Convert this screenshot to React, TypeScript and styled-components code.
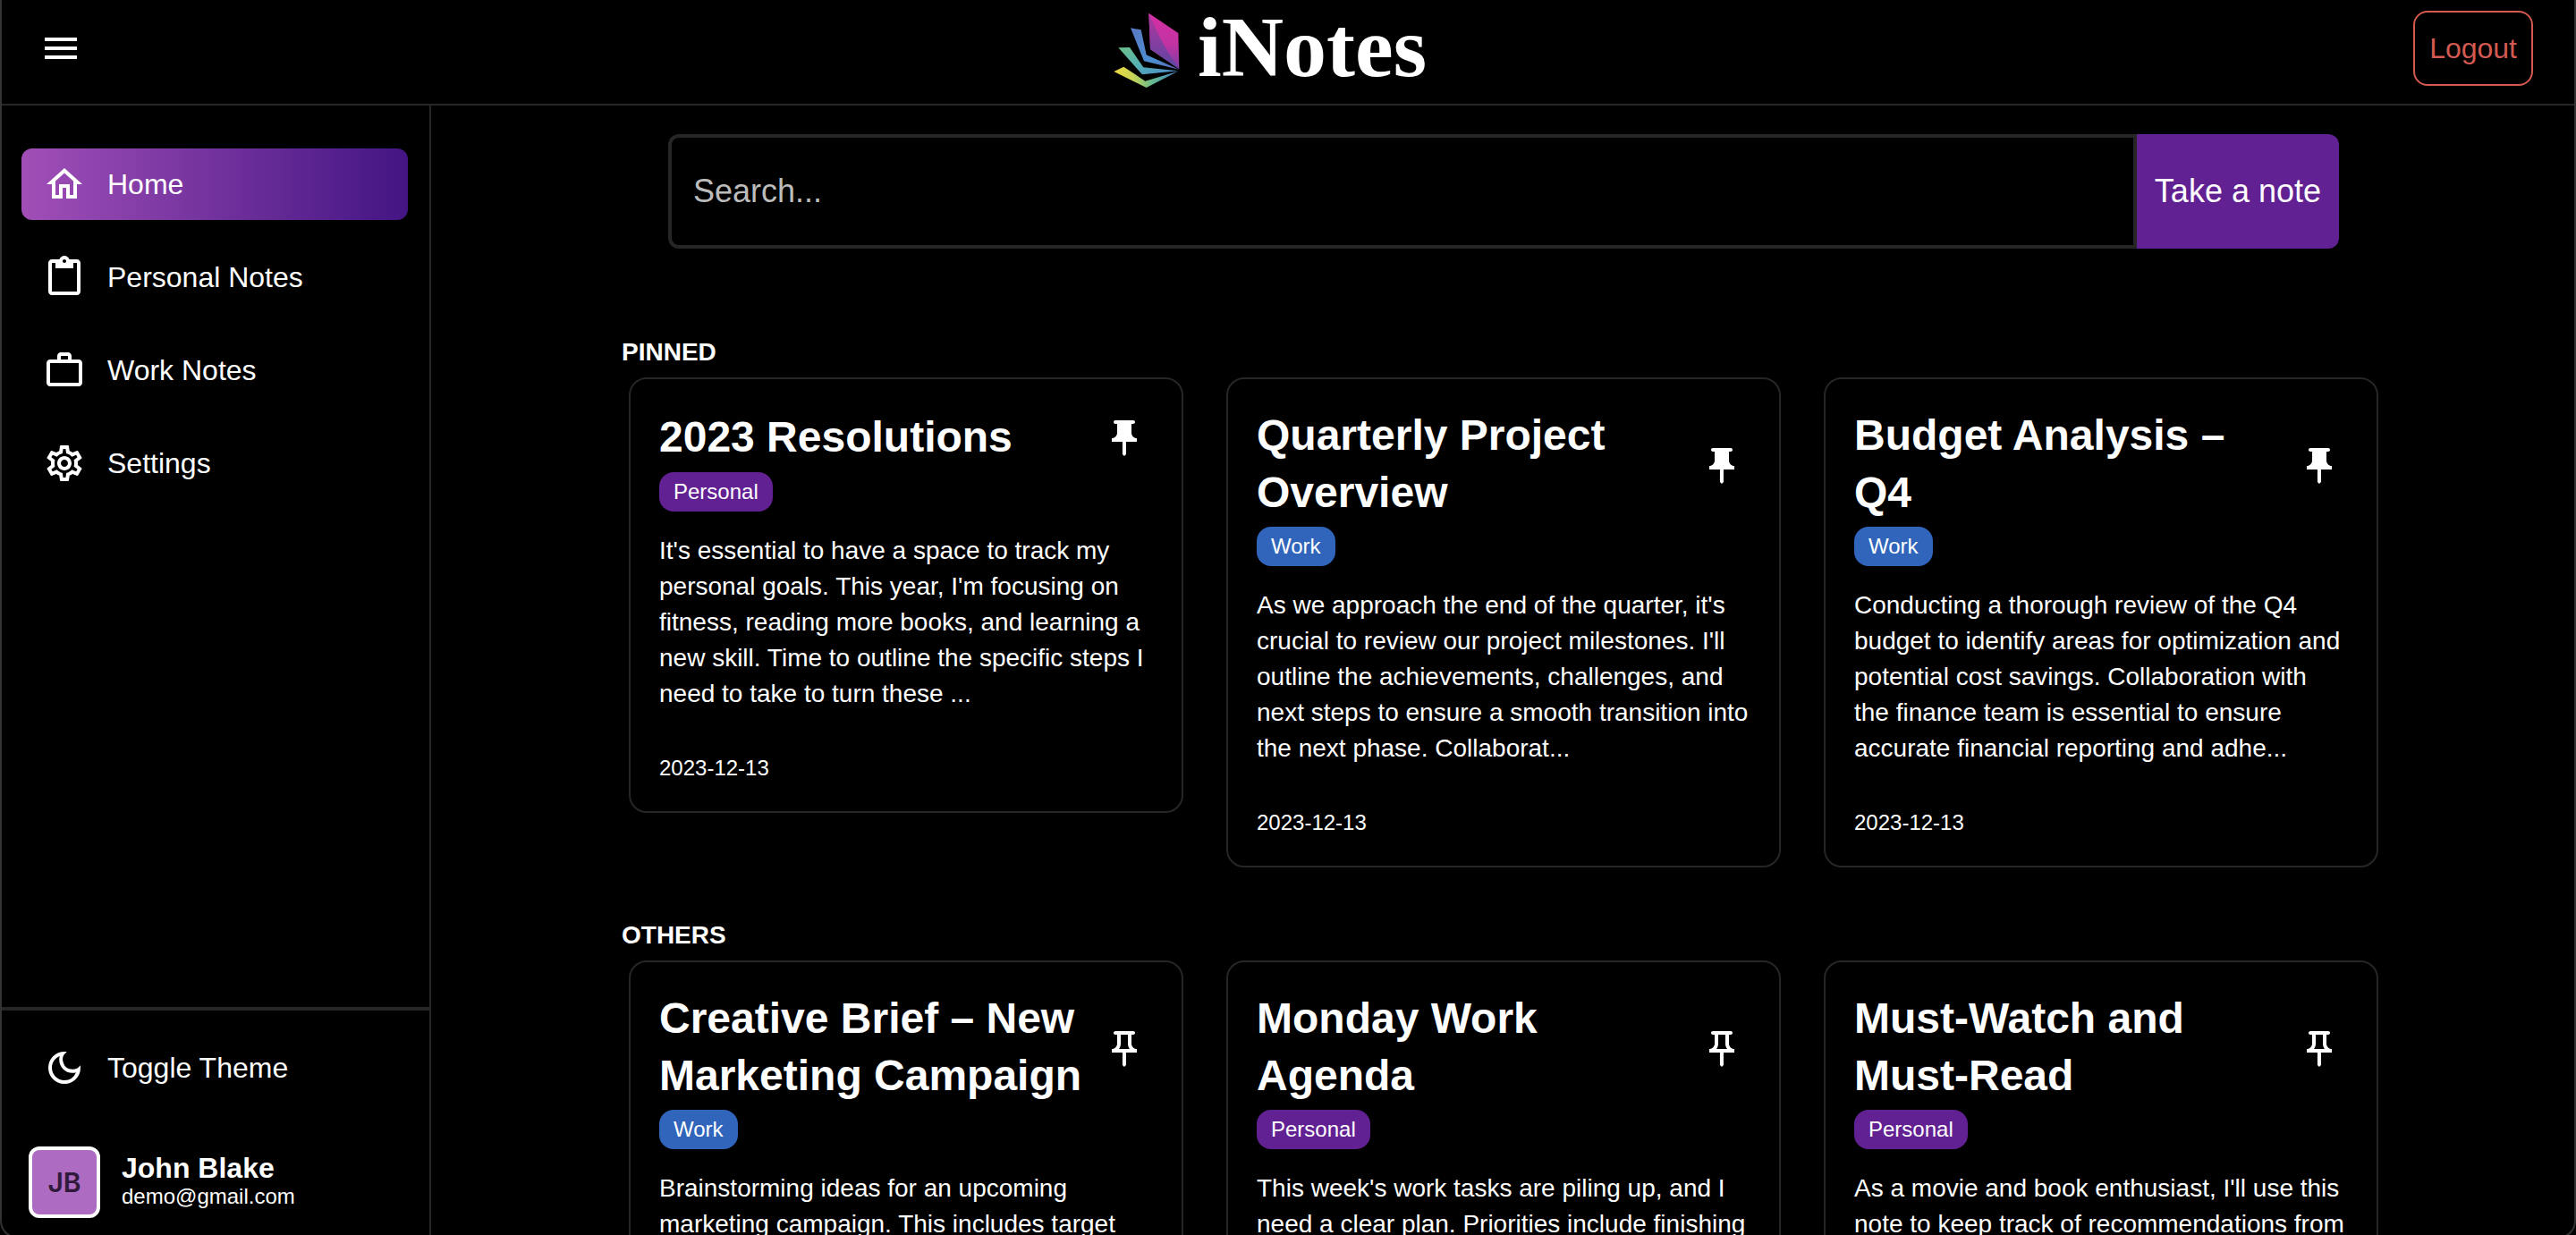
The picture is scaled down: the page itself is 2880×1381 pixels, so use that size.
import React from "react";
import styled, { createGlobalStyle } from "styled-components";
import {
  MdMenu,
  MdOutlineHome,
  MdContentPaste,
  MdWorkOutline,
  MdOutlineSettings,
  MdOutlineDarkMode,
  MdPushPin,
  MdOutlinePushPin,
} from "react-icons/md";

const colors = {
  bg: "#000000",
  text: "#ffffff",
  line: "#262626",
  frame: "#333333",
  purple: "#622192",
  blue: "#3065bb",
  danger: "#d25a50",
};

const GlobalStyle = createGlobalStyle`
  * { box-sizing: border-box; }
  body {
    margin: 0;
    background: ${colors.bg};
    color: ${colors.text};
    font-family: "Liberation Sans", Helvetica, Arial, sans-serif;
    font-size: 32px;
  }
  button, input { font: inherit; color: inherit; }
  h1, h2, h3, p { margin: 0; }
`;

const Shell = styled.div`
  display: flex;
  flex-direction: column;
  height: 100vh;
  overflow: hidden;
`;

const WindowFrame = styled.div`
  position: fixed;
  inset: 0 0 -4px;
  border: 2px solid ${colors.frame};
  border-top: 0;
  border-radius: 0 0 20px 20px;
  pointer-events: none;
`;

const Header = styled.header`
  display: flex;
  align-items: center;
  justify-content: space-between;
  flex: none;
  padding: 0 48px 8px 44px;
  border-bottom: 2px solid ${colors.line};
`;

const IconButton = styled.button`
  display: flex;
  flex: none;
  padding: 0;
  border: 0;
  background: none;
  cursor: pointer;
`;

const Brand = styled.a`
  display: flex;
  align-items: center;
  gap: 20px;
  margin-left: 50px;
  padding-bottom: 2px;
  color: inherit;
  text-decoration: none;
`;

const BrandName = styled.h1`
  font-family: "Liberation Serif", "Times New Roman", serif;
  font-size: 96px;
  line-height: 106px;
  font-weight: 700;
`;

const LogoutButton = styled.button`
  height: 84px;
  padding: 0 16px;
  border: 2px solid ${colors.danger};
  border-radius: 16px;
  background: none;
  color: ${colors.danger};
  cursor: pointer;
`;

const Body = styled.div`
  display: flex;
  flex: 1;
  min-height: 0;
`;

const Sidebar = styled.aside`
  display: flex;
  flex-direction: column;
  justify-content: space-between;
  flex: none;
  width: 482px;
  border-right: 2px solid ${colors.line};
`;

const Nav = styled.nav`
  display: flex;
  flex-direction: column;
  gap: 24px;
  padding: 48px 24px;
`;

const NavLink = styled.a<{ $active?: boolean }>`
  display: flex;
  align-items: center;
  gap: 24px;
  height: 80px;
  padding: 0 24px;
  border-radius: 12px;
  background: ${(p) => (p.$active ? "linear-gradient(90deg, #a14fb7, #431583)" : "none")};
  color: inherit;
  text-decoration: none;
`;

const SidebarFooter = styled.div`
  display: flex;
  flex-direction: column;
  gap: 48px;
  padding: 24px 24px 19px;
  border-top: 4px solid ${colors.line};
`;

const ThemeToggle = styled.button`
  display: flex;
  align-items: center;
  gap: 24px;
  height: 80px;
  padding: 0 24px;
  border: 0;
  background: none;
  cursor: pointer;
`;

const User = styled.div`
  display: flex;
  align-items: center;
  gap: 24px;
  padding: 0 8px;
`;

const Avatar = styled.div`
  display: grid;
  place-items: center;
  width: 80px;
  height: 80px;
  border: 4px solid #ffffff;
  border-radius: 12px;
  background: #ae6bc2;
  color: #301a3c;
  font-family: Inter, sans-serif;
  font-size: 30px;
  font-weight: 600;
`;

const UserText = styled.div`
  padding-bottom: 4px;
`;

const UserName = styled.p`
  font-weight: 700;
  line-height: 36px;
`;

const UserEmail = styled.p`
  font-size: 24px;
  line-height: 28px;
`;

const Main = styled.main`
  flex: 1;
  min-width: 0;
  padding-top: 32px;
  overflow-y: auto;
  scrollbar-width: none;
`;

const SearchBar = styled.form`
  display: flex;
  width: 78%;
  max-width: 1868px;
  height: 128px;
  margin: 0 auto 94px;
  font-size: 36px;
`;

const SearchInput = styled.input`
  flex: 1;
  min-width: 0;
  padding: 0 24px;
  border: 4px solid ${colors.line};
  border-radius: 12px 0 0 12px;
  background: none;
  outline: none;
  &::placeholder { color: #bcbcbc; opacity: 1; }
`;

const TakeNoteButton = styled.button`
  flex: none;
  padding: 0 20px;
  border: 0;
  border-radius: 0 12px 12px 0;
  background: ${colors.purple};
  cursor: pointer;
`;

const Section = styled.section`
  max-width: 1972px;
  margin: 0 auto 54px;
`;

const SectionTitle = styled.h2`
  padding-top: 2px;
  margin-bottom: 8px;
  font-size: 28px;
  line-height: 40px;
  text-transform: uppercase;
`;

const CardGrid = styled.div`
  display: grid;
  grid-template-columns: repeat(3, 1fr);
  align-items: start;
  gap: 48px;
  padding: 0 8px;
`;

const Card = styled.article`
  padding: 31px 32px 30px;
  border: 2px solid ${colors.line};
  border-radius: 20px;
`;

const CardHead = styled.div`
  display: flex;
  align-items: center;
  justify-content: space-between;
`;

const CardTitle = styled.h3`
  font-size: 48px;
  line-height: 64px;
`;

const PinButton = styled(IconButton)`
  padding: 11px 8px 8px;
`;

const Tag = styled.span<{ $kind: string }>`
  display: block;
  width: fit-content;
  margin: 6px 0 24px;
  padding: 4px 16px;
  border-radius: 16px;
  background: ${(p) => (p.$kind === "Work" ? colors.blue : colors.purple)};
  font-size: 24px;
  line-height: 36px;
`;

const CardText = styled.p`
  font-size: 28px;
  line-height: 40px;
`;

const CardDate = styled.time`
  display: block;
  margin-top: 45px;
  font-size: 24px;
  line-height: 36px;
`;

interface Note {
  title: string;
  tag: "Personal" | "Work";
  text: string;
  date: string;
}

const pinned: Note[] = [
  {
    title: "2023 Resolutions",
    tag: "Personal",
    text: "It's essential to have a space to track my personal goals. This year, I'm focusing on fitness, reading more books, and learning a new skill. Time to outline the specific steps I need to take to turn these ...",
    date: "2023-12-13",
  },
  {
    title: "Quarterly Project Overview",
    tag: "Work",
    text: "As we approach the end of the quarter, it's crucial to review our project milestones. I'll outline the achievements, challenges, and next steps to ensure a smooth transition into the next phase. Collaborat...",
    date: "2023-12-13",
  },
  {
    title: "Budget Analysis – Q4",
    tag: "Work",
    text: "Conducting a thorough review of the Q4 budget to identify areas for optimization and potential cost savings. Collaboration with the finance team is essential to ensure accurate financial reporting and adhe...",
    date: "2023-12-13",
  },
];

const others: Note[] = [
  {
    title: "Creative Brief – New Marketing Campaign",
    tag: "Work",
    text: "Brainstorming ideas for an upcoming marketing campaign. This includes target",
    date: "2023-12-13",
  },
  {
    title: "Monday Work Agenda",
    tag: "Personal",
    text: "This week's work tasks are piling up, and I need a clear plan. Priorities include finishing",
    date: "2023-12-13",
  },
  {
    title: "Must-Watch and Must-Read",
    tag: "Personal",
    text: "As a movie and book enthusiast, I'll use this note to keep track of recommendations from",
    date: "2023-12-13",
  },
];

const navItems = [
  { label: "Home", Icon: MdOutlineHome },
  { label: "Personal Notes", Icon: MdContentPaste },
  { label: "Work Notes", Icon: MdWorkOutline },
  { label: "Settings", Icon: MdOutlineSettings },
];

function Logo() {
  return (
    <svg width="74" height="92" viewBox="77 20 222 276" aria-hidden="true">
      <defs>
        <linearGradient id="page1" x1="0.5" y1="0" x2="0.5" y2="1">
          <stop offset="0" stopColor="#d42fa4" />
          <stop offset="0.55" stopColor="#c233a2" />
          <stop offset="1" stopColor="#7a3fa4" />
        </linearGradient>
        <linearGradient id="page1Fold" x1="0" y1="0" x2="0" y2="1">
          <stop offset="0" stopColor="#b5359f" />
          <stop offset="1" stopColor="#5a46a2" />
        </linearGradient>
        <linearGradient id="page2" x1="0" y1="0" x2="1" y2="1">
          <stop offset="0" stopColor="#5b78c4" />
          <stop offset="0.6" stopColor="#4b8fd0" />
          <stop offset="1" stopColor="#5f63b4" />
        </linearGradient>
        <linearGradient id="page3" x1="0" y1="0" x2="1" y2="1">
          <stop offset="0" stopColor="#6cc08c" />
          <stop offset="0.5" stopColor="#55b0b4" />
          <stop offset="1" stopColor="#4a86cc" />
        </linearGradient>
        <linearGradient id="page4" x1="0" y1="0" x2="1" y2="0">
          <stop offset="0" stopColor="#ecd83e" />
          <stop offset="0.3" stopColor="#c8d456" />
          <stop offset="0.6" stopColor="#63b98f" />
          <stop offset="1" stopColor="#4585cc" />
        </linearGradient>
      </defs>
      <path d="M195 43L294 110L297 231L200 164Z" fill="url(#page1)" />
      <path d="M195 43L230 120L256 168L297 231L200 164Z" fill="url(#page1Fold)" />
      <path d="M134 93L169 99L187 183L297 232L179 204Z" fill="url(#page2)" />
      <path d="M93 159L131 158L177 225L293 237L173 249Z" fill="url(#page3)" />
      <path d="M78 239L111 223L183 271L293 238L187 293Z" fill="url(#page4)" />
    </svg>
  );
}

function NoteSection({ title, notes, isPinned }: { title: string; notes: Note[]; isPinned?: boolean }) {
  const Pin = isPinned ? MdPushPin : MdOutlinePushPin;
  return (
    <Section>
      <SectionTitle>{title}</SectionTitle>
      <CardGrid>
        {notes.map((note) => (
          <Card key={note.title}>
            <CardHead>
              <CardTitle>{note.title}</CardTitle>
              <PinButton type="button" aria-label={isPinned ? "Unpin note" : "Pin note"}>
                <Pin size={48} />
              </PinButton>
            </CardHead>
            <Tag $kind={note.tag}>{note.tag}</Tag>
            <CardText>{note.text}</CardText>
            <CardDate dateTime={note.date}>{note.date}</CardDate>
          </Card>
        ))}
      </CardGrid>
    </Section>
  );
}

export default function App() {
  return (
    <Shell>
      <GlobalStyle />
      <Header>
        <IconButton type="button" aria-label="Toggle sidebar">
          <MdMenu size={48} />
        </IconButton>
        <Brand href="#">
          <Logo />
          <BrandName>iNotes</BrandName>
        </Brand>
        <LogoutButton type="button">Logout</LogoutButton>
      </Header>
      <Body>
        <Sidebar>
          <Nav>
            {navItems.map(({ label, Icon }, i) => (
              <NavLink key={label} href="#" $active={i === 0}>
                <Icon size={48} />
                {label}
              </NavLink>
            ))}
          </Nav>
          <SidebarFooter>
            <ThemeToggle type="button">
              <MdOutlineDarkMode size={48} />
              Toggle Theme
            </ThemeToggle>
            <User>
              <Avatar>JB</Avatar>
              <UserText>
                <UserName>John Blake</UserName>
                <UserEmail>demo@gmail.com</UserEmail>
              </UserText>
            </User>
          </SidebarFooter>
        </Sidebar>
        <Main>
          <SearchBar role="search" onSubmit={(e) => e.preventDefault()}>
            <SearchInput type="text" placeholder="Search..." aria-label="Search notes" />
            <TakeNoteButton type="button">Take a note</TakeNoteButton>
          </SearchBar>
          <NoteSection title="Pinned" notes={pinned} isPinned />
          <NoteSection title="Others" notes={others} />
        </Main>
      </Body>
      <WindowFrame />
    </Shell>
  );
}
